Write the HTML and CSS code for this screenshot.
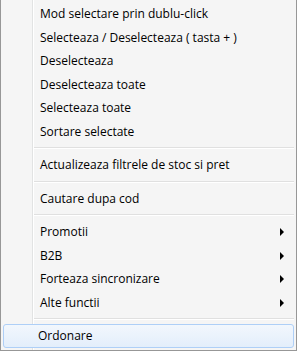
FILE: index.html
```html
<!DOCTYPE html>
<html lang="ro">
<head>
    <meta charset="UTF-8">
    <title>Meniu</title>
    <link rel="stylesheet" href="styles.css">
</head>
<body>
    <div class="menu">
        <div class="gutter-line"></div>
        <div class="item">Mod selectare prin dublu-click</div>
        <div class="item">Selecteaza / Deselecteaza ( tasta + )</div>
        <div class="item">Deselecteaza</div>
        <div class="item">Deselecteaza toate</div>
        <div class="item">Selecteaza toate</div>
        <div class="item">Sortare selectate</div>
        <div class="separator"></div>
        <div class="item">Actualizeaza filtrele de stoc si pret</div>
        <div class="separator"></div>
        <div class="item">Cautare dupa cod</div>
        <div class="separator"></div>
        <div class="item submenu">Promotii</div>
        <div class="item submenu">B2B</div>
        <div class="item submenu">Forteaza sincronizare</div>
        <div class="item submenu">Alte functii</div>
        <div class="separator"></div>
        <div class="item hover">Ordonare</div>
    </div>
</body>
</html>
```
FILE: styles.css
```css
body {
    margin: 0;
    background: #ffffff;
    font-family: "Open Sans", "Noto Sans", sans-serif;
    font-size: 12px;
    color: #000000;
}

.menu {
    position: relative;
    width: 295px;
    height: 348px;
    padding: 2px 0 0 0;
    box-sizing: border-box;
    background: #f5f5f5;
    border-left: 1px solid #979797;
    border-right: 1px solid #979797;
    border-bottom: 1px solid #979797;
    box-sizing: content-box;
}

/* vertical line next to the icon column */
.gutter-line {
    position: absolute;
    top: 0;
    bottom: 0;
    left: 31px;
    width: 1px;
    background: #e2e3e3;
    border-right: 1px solid #ffffff;
}

.item {
    position: relative;
    height: 23.5px;
    line-height: 23.5px;
    padding-left: 37px;
    margin: 0 2px;
    white-space: nowrap;
}

.submenu::after {
    content: "";
    position: absolute;
    right: 10px;
    top: 8px;
    border-left: 4px solid #000000;
    border-top: 4px solid transparent;
    border-bottom: 4px solid transparent;
}

.separator {
    position: relative;
    height: 10px;
}

.separator::before {
    content: "";
    position: absolute;
    left: 33px;
    right: 2px;
    top: 4px;
    height: 1px;
    background: #e0e0e0;
    border-bottom: 1px solid #ffffff;
}

.hover {
    border: 1px solid #aecff7;
    border-radius: 3px;
    background: linear-gradient(#f2f7fd, #e3eefb);
    height: 21.5px;
    line-height: 21.5px;
    padding-left: 34px;
}
```
